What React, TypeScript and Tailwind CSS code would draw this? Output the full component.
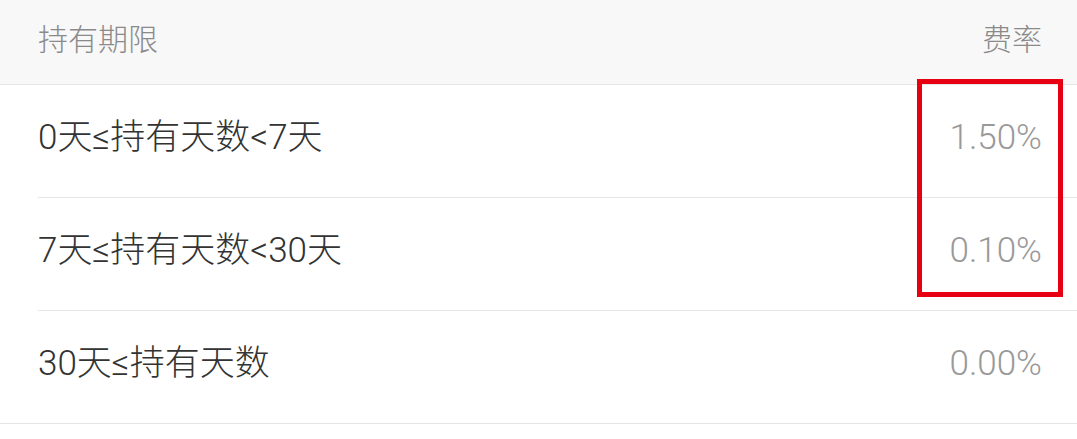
const rows = [
  { term: "0天≤持有天数<7天", rate: "1.50%" },
  { term: "7天≤持有天数<30天", rate: "0.10%" },
  { term: "30天≤持有天数", rate: "0.00%" },
];

export default function App() {
  return (
    <div
      className="relative w-[1077px] h-[439px] bg-white overflow-hidden"
      style={{ fontFamily: '"Roboto", "Noto Sans CJK SC", sans-serif' }}
    >
      {/* Header */}
      <div className="h-[85px] bg-[#f8f8f8] border-b border-[#e6e6e6] flex items-center justify-between pl-[38px] pr-[35px] pb-[6px]">
        <span className="text-[30px] text-[#8a8a8a] font-light">持有期限</span>
        <span className="text-[30px] text-[#8a8a8a] font-light">费率</span>
      </div>

      {/* Rows */}
      <div className="flex flex-col">
        {rows.map((row, i) => (
          <div
            key={i}
            className={
              i === rows.length - 1
                ? "h-[113px] border-b border-[#e6e6e6]"
                : "h-[113px] pl-[38px]"
            }
          >
            <div
              className={
                i === rows.length - 1
                  ? "h-full flex items-center justify-between pl-[38px] pr-[35px] pb-[6px]"
                  : "h-full flex items-center justify-between pr-[35px] pb-[6px] border-b border-[#e6e6e6]"
              }
            >
              <span className="text-[35px] text-[#333333] font-light">{row.term}</span>
              <span className="text-[35px] text-[#999999] font-light">{row.rate}</span>
            </div>
          </div>
        ))}
      </div>

      {/* Highlight box */}
      <div className="absolute left-[917px] top-[79px] w-[146px] h-[218px] border-[5px] border-[#e60012]" />
    </div>
  );
}
